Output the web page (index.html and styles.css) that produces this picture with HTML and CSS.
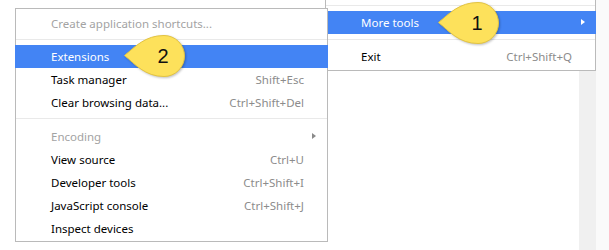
FILE: index.html
```html
<!DOCTYPE html>
<html>
<head>
<meta charset="utf-8">
<link rel="stylesheet" href="styles.css">
</head>
<body>
<div class="screen">
  <div class="page">
    <div class="content"></div>
    <div class="scrollbar"></div>
    <div class="frame"></div>
  </div>

  <div class="menu main-menu">
    <div class="sep"></div>
    <div class="item active"><span class="label">More tools</span><span class="arrow white"></span></div>
    <div class="sep"></div>
    <div class="item"><span class="label">Exit</span><span class="key">Ctrl+Shift+Q</span></div>
  </div>

  <div class="menu sub-menu">
    <div class="item disabled"><span class="label">Create application shortcuts...</span></div>
    <div class="sep"></div>
    <div class="item active"><span class="label">Extensions</span></div>
    <div class="item"><span class="label">Task manager</span><span class="key">Shift+Esc</span></div>
    <div class="item"><span class="label">Clear browsing data...</span><span class="key">Ctrl+Shift+Del</span></div>
    <div class="sep sep-low"></div>
    <div class="item disabled"><span class="label">Encoding</span><span class="arrow grey"></span></div>
    <div class="item"><span class="label">View source</span><span class="key">Ctrl+U</span></div>
    <div class="item"><span class="label">Developer tools</span><span class="key">Ctrl+Shift+I</span></div>
    <div class="item"><span class="label">JavaScript console</span><span class="key">Ctrl+Shift+J</span></div>
    <div class="item"><span class="label">Inspect devices</span></div>
  </div>

  <div class="callout callout-1">
    <svg width="66" height="48" viewBox="0 0 66 48">
      <path class="bubble" d="M1.5,21.5 C12,13 22,1.5 41,1.5 A20.5,20.5 0 1 1 41,42.5 C22,42.5 12,30 1.5,21.5 Z"/>
    </svg>
    <span class="num">1</span>
  </div>
  <div class="callout callout-2">
    <svg width="66" height="48" viewBox="0 0 66 48">
      <path class="bubble" d="M1.5,21.5 C12,13 22,1.5 41,1.5 A20.5,20.5 0 1 1 41,42.5 C22,42.5 12,30 1.5,21.5 Z"/>
    </svg>
    <span class="num">2</span>
  </div>
</div>
</body>
</html>
```

FILE: styles.css
```css
* { box-sizing: border-box; }
html, body { margin: 0; padding: 0; background: #ffffff; }
.screen {
  position: relative;
  width: 609px;
  height: 250px;
  overflow: hidden;
  font-family: "Noto Sans", "Open Sans", sans-serif;
  font-size: 11.5px;
}
.page { display: flex; height: 250px; }
.content { flex: 0 0 579px; background: #ffffff; }
.scrollbar { flex: 0 0 17px; background: #f0f0f0; }
.frame { flex: 1; background: #fafafa; }

.menu {
  position: absolute;
  background: #ffffff;
  border: 1px solid #bababa;
}
.main-menu {
  left: 325px;
  top: 0;
  width: 271px;
  border-top: none;
  padding: 5px 0 2px;
}
.sub-menu {
  left: 15px;
  top: 8px;
  width: 313px;
  padding: 3px 0 1px;
}
.item {
  position: relative;
  display: flex;
  align-items: center;
  justify-content: space-between;
  height: 23px;
  padding: 0 23px 0 35px;
  color: #000000;
  white-space: nowrap;
}
.sub-menu .item { padding-right: 23px; }
.item.active {
  background: #4384f4;
  color: #ffffff;
  margin: 0 -1px;
  padding-left: 36px;
}
.item.disabled { color: #a3a3a3; }
.key { color: #8c8c8c; }
.sep {
  height: 1px;
  background: #e9e9e9;
  margin: 0 0 5px;
}
.sub-menu .sep { margin: 4px 0 5px; }
.sub-menu .sep-low { margin: 4px 0 6px; }
.main-menu .item + .sep { margin-top: 5px; }

.arrow {
  position: absolute;
  top: 8px;
  width: 0;
  height: 0;
  border-top: 3.5px solid transparent;
  border-bottom: 3.5px solid transparent;
  border-left: 4px solid #ffffff;
}
.arrow.white { right: 11px; }
.arrow.grey { right: 11px; border-left-color: #8a8a8a; }

.callout {
  position: absolute;
  width: 66px;
  height: 48px;
}
.callout svg { display: block; filter: drop-shadow(1px 1.5px 1px rgba(0,0,0,0.25)); }
.bubble { fill: #fde15b; stroke: #e2c341; stroke-width: 1; }
.callout .num {
  position: absolute;
  top: 11px;
  left: 29px;
  width: 22px;
  text-align: center;
  font-family: "Liberation Sans", Arial, sans-serif;
  font-size: 20px;
  line-height: 22px;
  color: #111111;
}
.callout-1 { left: 437px; top: 1px; }
.callout-2 { left: 123px; top: 34px; }
```
